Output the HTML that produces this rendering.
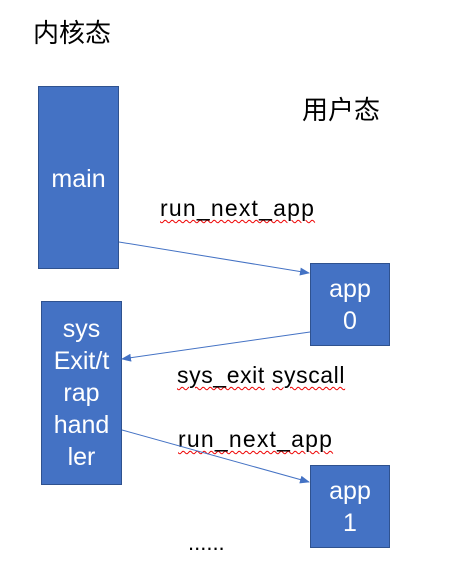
<!DOCTYPE html>
<html><head><style>
body{margin:0;width:464px;height:578px;background:#fff;position:relative;overflow:hidden;font-family:"Liberation Sans","Noto Sans CJK SC",sans-serif;}
.t{position:absolute;font-size:24px;color:#000;white-space:nowrap;line-height:1;}
.b{position:absolute;background:#4472C4;border:1px solid #2F528F;box-sizing:border-box;color:#fff;font-size:25px;text-align:center;display:flex;align-items:center;justify-content:center;line-height:32px;}
.u{text-decoration:underline wavy #e00;text-decoration-thickness:1px;text-underline-offset:3px;}
</style></head><body>
<div class="t" style="left:33px;top:20px;font-size:26px">内核态</div>
<div class="t" style="left:302px;top:97px;font-size:26px">用户态</div>
<div class="b" style="left:38px;top:86px;width:81px;height:183px;align-items:flex-start;padding-top:76px">main</div>
<div class="b" style="left:310px;top:263px;width:80px;height:83px">app<br>0</div>
<div class="b" style="left:41px;top:301px;width:81px;height:184px">sys<br>Exit/t<br>rap<br>hand<br>ler</div>
<div class="b" style="left:310px;top:465px;width:80px;height:83px">app<br>1</div>
<div class="t u" style="left:160px;top:197px;font-size:23px;letter-spacing:1.2px">run_next_app</div>
<div class="t" style="left:177px;top:364px;font-size:23px;letter-spacing:0.6px"><span class="u">sys_exit</span> <span class="u">syscall</span></div>
<div class="t u" style="left:178px;top:428px;font-size:23px;letter-spacing:1.2px">run_next_app</div>
<div class="t" style="left:188px;top:532px;font-size:22px">......</div>
<svg width="464" height="578" style="position:absolute;left:0;top:0">
<defs><marker id="a" markerWidth="10" markerHeight="8" refX="9" refY="4" orient="auto" markerUnits="userSpaceOnUse"><path d="M0,0 L10,4 L0,8 Z" fill="#4472C4"/></marker></defs>
<g stroke="#4472C4" stroke-width="1" fill="none">
<line x1="119" y1="242" x2="309" y2="273" marker-end="url(#a)"/>
<line x1="310" y1="332" x2="122" y2="359" marker-end="url(#a)"/>
<line x1="122" y1="430" x2="309" y2="482" marker-end="url(#a)"/>
</g></svg>
</body></html>
